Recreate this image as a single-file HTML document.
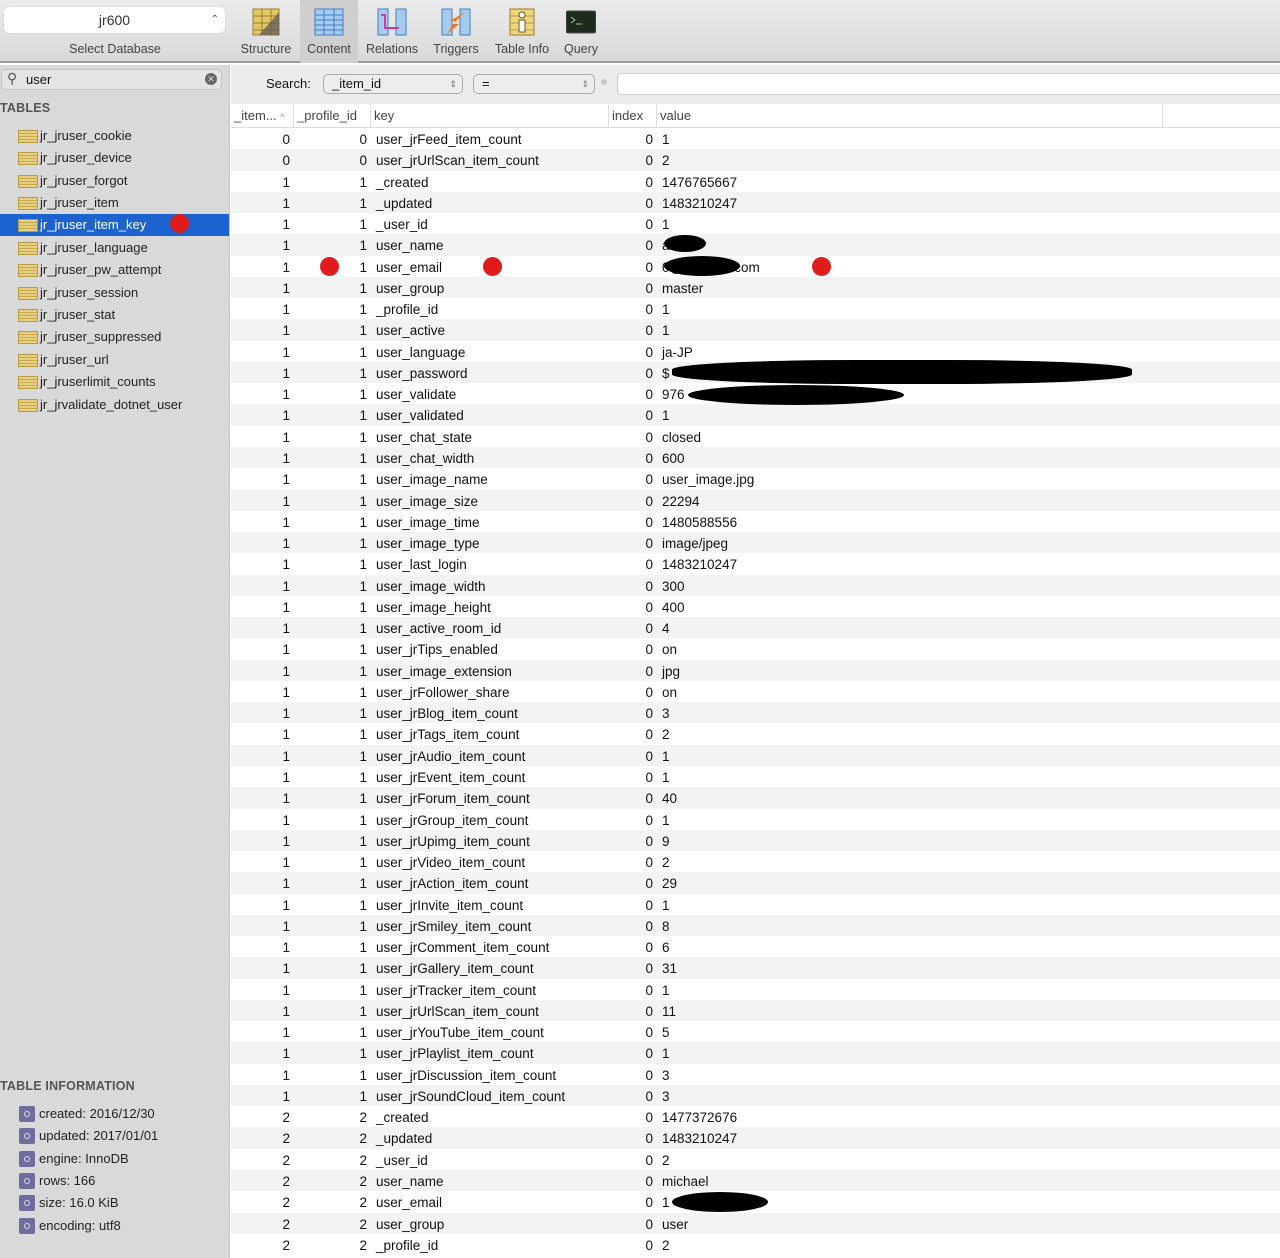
<!DOCTYPE html>
<html><head><meta charset="utf-8"><style>
*{margin:0;padding:0;box-sizing:border-box}
body{width:1280px;height:1258px;overflow:hidden;background:#fff;font-family:"Liberation Sans",sans-serif;position:relative;color:#111}
.tb{position:absolute;left:0;top:0;width:1280px;height:63px;background:linear-gradient(#ebebeb,#d9d9d9);border-bottom:2px solid #9c9c9c}
.db{position:absolute;left:4px;top:7px;width:221px;height:26px;background:#fff;border-radius:5px;box-shadow:0 0 1px #aaa;text-align:center;font-size:14px;line-height:26px;color:#333}
.db span{position:absolute;right:6px;top:0;font-size:10px;color:#555}
.sdl{position:absolute;left:0;top:42px;width:230px;text-align:center;font-size:12.5px;color:#444}
.tool{position:absolute;top:0;height:63px;text-align:center;font-size:12.5px;color:#444}
.tool .lab{position:absolute;top:42px;left:0;right:0}
.tool svg{position:absolute;top:6px;left:50%;margin-left:-15px}
.side{position:absolute;left:0;top:65px;width:230px;height:1193px;background:#d9d9d9;border-right:1px solid #c8c8c8}
.fs{position:absolute;left:1px;top:4px;width:221px;height:21px;background:#e4e4e4;border:1px solid #c4c4c4;border-radius:5px;font-size:13px;line-height:19px;padding-left:24px}
.hd{position:absolute;left:0;font-size:12.5px;color:#555;font-weight:bold;letter-spacing:0.2px}
.it{position:absolute;left:0;width:229px;height:22px;font-size:13px;line-height:22px;padding-left:40px;color:#222}
.it i{position:absolute;left:18px;top:5px;width:20px;height:13px;background:repeating-linear-gradient(#e5cf82 0 2px,#c9a94a 2px 3px);border:1px solid #b7993f}
.it.sel{background:#1c63d0;color:#fff}
.inf{position:absolute;left:0;font-size:13px;color:#222;padding-left:39px;height:22px;line-height:22px}
.inf i{position:absolute;left:19px;top:3px;width:16px;height:16px;background:#6f6c9e;border-radius:2px}
.inf i:after{content:"";position:absolute;left:5px;top:5px;width:4px;height:4px;border:1px solid #dcdaf0;border-radius:50%}
.sbar{position:absolute;left:231px;top:65px;width:1049px;height:39px;background:#ececec}
.sel2{position:absolute;top:9px;height:20px;border:1px solid #aaa;border-radius:5px;background:#ededed;font-size:13px;line-height:18px;padding-left:8px}
.thead{position:absolute;left:231px;top:104px;width:1049px;height:24px;background:#fff;border-bottom:1px solid #ddd;font-size:13px;color:#444}
.thead div{position:absolute;top:0;height:24px;line-height:24px;border-right:1px solid #ddd;padding-left:3px}
.rows{position:absolute;left:231px;top:128px;width:1049px}
.r{height:21.27px;position:relative;font-size:13.5px;line-height:21px}
.r:nth-child(even){background:#f3f3f3}
.r span{position:absolute;top:1px}
.a{right:990px}.b{right:913px}.c{left:145px}.d{right:627px}.e{left:431px}
.blk{position:absolute;background:#000;border-radius:50%}
.dot{position:absolute;width:19px;height:19px;border-radius:50%;background:#e01b1b}
</style></head><body>
<div class="tb">
 <div class="db">jr600<span>&#8963;<br></span></div>
 <div class="sdl">Select Database</div>
 <div class="tool" style="left:234px;width:64px"><svg width="30" height="30"><rect x="2" y="3" width="26" height="26" fill="#e3c766" stroke="#9a7b2a"/><path d="M2 10h26M2 17h26M2 24h26M11 3v26M20 3v26" stroke="#9a7b2a"/><path d="M28 6 L8 29 H28Z" fill="#555" opacity=".7"/></svg><div class="lab">Structure</div></div>
 <div class="tool" style="left:300px;width:58px;background:#cfcfcf"><svg width="30" height="30"><rect x="1" y="3" width="28" height="26" fill="#a7cbee" stroke="#3f7fc4"/><path d="M1 9h28M1 14h28M1 19h28M1 24h28M10 3v26M20 3v26" stroke="#3f7fc4"/></svg><div class="lab">Content</div></div>
 <div class="tool" style="left:362px;width:60px"><svg width="30" height="30"><rect x="1" y="3" width="10" height="26" fill="#a7cbee" stroke="#3f7fc4"/><rect x="19" y="3" width="10" height="26" fill="#a7cbee" stroke="#3f7fc4"/><path d="M4 9h4v13h14" stroke="#d0399a" stroke-width="2" fill="none"/></svg><div class="lab">Relations</div></div>
 <div class="tool" style="left:426px;width:60px"><svg width="30" height="30"><rect x="1" y="3" width="10" height="26" fill="#a7cbee" stroke="#3f7fc4"/><rect x="19" y="3" width="10" height="26" fill="#a7cbee" stroke="#3f7fc4"/><path d="M24 6 L12 18 h6 L6 28 L14 15 h-5z" fill="#f07a1a"/></svg><div class="lab">Triggers</div></div>
 <div class="tool" style="left:490px;width:64px"><svg width="30" height="30"><rect x="3" y="3" width="24" height="26" fill="#ecd67e" stroke="#9a7b2a"/><path d="M3 10h24M3 17h24M3 24h24" stroke="#b89a45"/><circle cx="15" cy="9" r="3" fill="#fff" stroke="#6b5620"/><rect x="12" y="14" width="6" height="12" fill="#fff" stroke="#6b5620"/></svg><div class="lab">Table Info</div></div>
 <div class="tool" style="left:558px;width:46px"><svg width="30" height="30"><rect x="0" y="5" width="30" height="22" rx="2" fill="#1d2a1d" stroke="#555"/><path d="M5 11l4 3-4 3M10 18h6" stroke="#8bd48b" fill="none"/></svg><div class="lab">Query</div></div>
</div>
<div class="side">
 <div class="fs"><span style="position:absolute;left:5px;top:-1px;font-size:14px;color:#555">&#9906;</span>user<span style="position:absolute;right:4px;top:3px;width:12px;height:12px;border-radius:50%;background:#666;color:#ddd;font-size:9px;line-height:12px;text-align:center">&#10005;</span></div>
 <div class="hd" style="top:36px">TABLES</div>
 <div class="it" style="top:60px"><i></i>jr_jruser_cookie</div>
 <div class="it" style="top:82px"><i></i>jr_jruser_device</div>
 <div class="it" style="top:105px"><i></i>jr_jruser_forgot</div>
 <div class="it" style="top:127px"><i></i>jr_jruser_item</div>
 <div class="it sel" style="top:149px"><i></i>jr_jruser_item_key</div>
 <div class="it" style="top:172px"><i></i>jr_jruser_language</div>
 <div class="it" style="top:194px"><i></i>jr_jruser_pw_attempt</div>
 <div class="it" style="top:217px"><i></i>jr_jruser_session</div>
 <div class="it" style="top:239px"><i></i>jr_jruser_stat</div>
 <div class="it" style="top:261px"><i></i>jr_jruser_suppressed</div>
 <div class="it" style="top:284px"><i></i>jr_jruser_url</div>
 <div class="it" style="top:306px"><i></i>jr_jruserlimit_counts</div>
 <div class="it" style="top:329px"><i></i>jr_jrvalidate_dotnet_user</div>
 <div class="hd" style="top:1014px">TABLE INFORMATION</div>
 <div class="inf" style="top:1038px"><i></i>created: 2016/12/30</div>
 <div class="inf" style="top:1060px"><i></i>updated: 2017/01/01</div>
 <div class="inf" style="top:1083px"><i></i>engine: InnoDB</div>
 <div class="inf" style="top:1105px"><i></i>rows: 166</div>
 <div class="inf" style="top:1127px"><i></i>size: 16.0 KiB</div>
 <div class="inf" style="top:1150px"><i></i>encoding: utf8</div>
</div>
<div class="dot" style="left:170px;top:214px"></div>
<div class="sbar">
 <span style="position:absolute;left:35px;top:11px;font-size:13px">Search:</span>
 <div class="sel2" style="left:92px;width:140px">_item_id<span style="position:absolute;right:5px;font-size:9px;color:#777">&#8661;</span></div>
 <div class="sel2" style="left:242px;width:122px">=<span style="position:absolute;right:5px;font-size:9px;color:#777">&#8661;</span></div>
 <span style="position:absolute;left:370px;top:14px;width:6px;height:6px;border-radius:50%;background:#c8c8c8"></span>
 <div style="position:absolute;left:386px;top:8px;width:680px;height:22px;background:#fff;border:1px solid #ccc;border-radius:4px"></div>
</div>
<div class="thead">
 <div style="left:0;width:63px">_item... <span style="font-size:9px;color:#888">^</span></div>
 <div style="left:63px;width:77px">_profile_id</div>
 <div style="left:140px;width:238px">key</div>
 <div style="left:378px;width:48px">index</div>
 <div style="left:426px;width:506px">value</div>
</div>
<div class="rows">
<div class="r"><span class="a">0</span><span class="b">0</span><span class="c">user_jrFeed_item_count</span><span class="d">0</span><span class="e">1</span></div>
<div class="r"><span class="a">0</span><span class="b">0</span><span class="c">user_jrUrlScan_item_count</span><span class="d">0</span><span class="e">2</span></div>
<div class="r"><span class="a">1</span><span class="b">1</span><span class="c">_created</span><span class="d">0</span><span class="e">1476765667</span></div>
<div class="r"><span class="a">1</span><span class="b">1</span><span class="c">_updated</span><span class="d">0</span><span class="e">1483210247</span></div>
<div class="r"><span class="a">1</span><span class="b">1</span><span class="c">_user_id</span><span class="d">0</span><span class="e">1</span></div>
<div class="r"><span class="a">1</span><span class="b">1</span><span class="c">user_name</span><span class="d">0</span><span class="e">a</span></div>
<div class="r"><span class="a">1</span><span class="b">1</span><span class="c">user_email</span><span class="d">0</span><span class="e">0@xxxxxxx.com</span></div>
<div class="r"><span class="a">1</span><span class="b">1</span><span class="c">user_group</span><span class="d">0</span><span class="e">master</span></div>
<div class="r"><span class="a">1</span><span class="b">1</span><span class="c">_profile_id</span><span class="d">0</span><span class="e">1</span></div>
<div class="r"><span class="a">1</span><span class="b">1</span><span class="c">user_active</span><span class="d">0</span><span class="e">1</span></div>
<div class="r"><span class="a">1</span><span class="b">1</span><span class="c">user_language</span><span class="d">0</span><span class="e">ja-JP</span></div>
<div class="r"><span class="a">1</span><span class="b">1</span><span class="c">user_password</span><span class="d">0</span><span class="e">$</span></div>
<div class="r"><span class="a">1</span><span class="b">1</span><span class="c">user_validate</span><span class="d">0</span><span class="e">976</span></div>
<div class="r"><span class="a">1</span><span class="b">1</span><span class="c">user_validated</span><span class="d">0</span><span class="e">1</span></div>
<div class="r"><span class="a">1</span><span class="b">1</span><span class="c">user_chat_state</span><span class="d">0</span><span class="e">closed</span></div>
<div class="r"><span class="a">1</span><span class="b">1</span><span class="c">user_chat_width</span><span class="d">0</span><span class="e">600</span></div>
<div class="r"><span class="a">1</span><span class="b">1</span><span class="c">user_image_name</span><span class="d">0</span><span class="e">user_image.jpg</span></div>
<div class="r"><span class="a">1</span><span class="b">1</span><span class="c">user_image_size</span><span class="d">0</span><span class="e">22294</span></div>
<div class="r"><span class="a">1</span><span class="b">1</span><span class="c">user_image_time</span><span class="d">0</span><span class="e">1480588556</span></div>
<div class="r"><span class="a">1</span><span class="b">1</span><span class="c">user_image_type</span><span class="d">0</span><span class="e">image/jpeg</span></div>
<div class="r"><span class="a">1</span><span class="b">1</span><span class="c">user_last_login</span><span class="d">0</span><span class="e">1483210247</span></div>
<div class="r"><span class="a">1</span><span class="b">1</span><span class="c">user_image_width</span><span class="d">0</span><span class="e">300</span></div>
<div class="r"><span class="a">1</span><span class="b">1</span><span class="c">user_image_height</span><span class="d">0</span><span class="e">400</span></div>
<div class="r"><span class="a">1</span><span class="b">1</span><span class="c">user_active_room_id</span><span class="d">0</span><span class="e">4</span></div>
<div class="r"><span class="a">1</span><span class="b">1</span><span class="c">user_jrTips_enabled</span><span class="d">0</span><span class="e">on</span></div>
<div class="r"><span class="a">1</span><span class="b">1</span><span class="c">user_image_extension</span><span class="d">0</span><span class="e">jpg</span></div>
<div class="r"><span class="a">1</span><span class="b">1</span><span class="c">user_jrFollower_share</span><span class="d">0</span><span class="e">on</span></div>
<div class="r"><span class="a">1</span><span class="b">1</span><span class="c">user_jrBlog_item_count</span><span class="d">0</span><span class="e">3</span></div>
<div class="r"><span class="a">1</span><span class="b">1</span><span class="c">user_jrTags_item_count</span><span class="d">0</span><span class="e">2</span></div>
<div class="r"><span class="a">1</span><span class="b">1</span><span class="c">user_jrAudio_item_count</span><span class="d">0</span><span class="e">1</span></div>
<div class="r"><span class="a">1</span><span class="b">1</span><span class="c">user_jrEvent_item_count</span><span class="d">0</span><span class="e">1</span></div>
<div class="r"><span class="a">1</span><span class="b">1</span><span class="c">user_jrForum_item_count</span><span class="d">0</span><span class="e">40</span></div>
<div class="r"><span class="a">1</span><span class="b">1</span><span class="c">user_jrGroup_item_count</span><span class="d">0</span><span class="e">1</span></div>
<div class="r"><span class="a">1</span><span class="b">1</span><span class="c">user_jrUpimg_item_count</span><span class="d">0</span><span class="e">9</span></div>
<div class="r"><span class="a">1</span><span class="b">1</span><span class="c">user_jrVideo_item_count</span><span class="d">0</span><span class="e">2</span></div>
<div class="r"><span class="a">1</span><span class="b">1</span><span class="c">user_jrAction_item_count</span><span class="d">0</span><span class="e">29</span></div>
<div class="r"><span class="a">1</span><span class="b">1</span><span class="c">user_jrInvite_item_count</span><span class="d">0</span><span class="e">1</span></div>
<div class="r"><span class="a">1</span><span class="b">1</span><span class="c">user_jrSmiley_item_count</span><span class="d">0</span><span class="e">8</span></div>
<div class="r"><span class="a">1</span><span class="b">1</span><span class="c">user_jrComment_item_count</span><span class="d">0</span><span class="e">6</span></div>
<div class="r"><span class="a">1</span><span class="b">1</span><span class="c">user_jrGallery_item_count</span><span class="d">0</span><span class="e">31</span></div>
<div class="r"><span class="a">1</span><span class="b">1</span><span class="c">user_jrTracker_item_count</span><span class="d">0</span><span class="e">1</span></div>
<div class="r"><span class="a">1</span><span class="b">1</span><span class="c">user_jrUrlScan_item_count</span><span class="d">0</span><span class="e">11</span></div>
<div class="r"><span class="a">1</span><span class="b">1</span><span class="c">user_jrYouTube_item_count</span><span class="d">0</span><span class="e">5</span></div>
<div class="r"><span class="a">1</span><span class="b">1</span><span class="c">user_jrPlaylist_item_count</span><span class="d">0</span><span class="e">1</span></div>
<div class="r"><span class="a">1</span><span class="b">1</span><span class="c">user_jrDiscussion_item_count</span><span class="d">0</span><span class="e">3</span></div>
<div class="r"><span class="a">1</span><span class="b">1</span><span class="c">user_jrSoundCloud_item_count</span><span class="d">0</span><span class="e">3</span></div>
<div class="r"><span class="a">2</span><span class="b">2</span><span class="c">_created</span><span class="d">0</span><span class="e">1477372676</span></div>
<div class="r"><span class="a">2</span><span class="b">2</span><span class="c">_updated</span><span class="d">0</span><span class="e">1483210247</span></div>
<div class="r"><span class="a">2</span><span class="b">2</span><span class="c">_user_id</span><span class="d">0</span><span class="e">2</span></div>
<div class="r"><span class="a">2</span><span class="b">2</span><span class="c">user_name</span><span class="d">0</span><span class="e">michael</span></div>
<div class="r"><span class="a">2</span><span class="b">2</span><span class="c">user_email</span><span class="d">0</span><span class="e">1</span></div>
<div class="r"><span class="a">2</span><span class="b">2</span><span class="c">user_group</span><span class="d">0</span><span class="e">user</span></div>
<div class="r"><span class="a">2</span><span class="b">2</span><span class="c">_profile_id</span><span class="d">0</span><span class="e">2</span></div>
</div>
<div class="blk" style="left:664px;top:235px;width:42px;height:17px"></div>
<div class="blk" style="left:664px;top:256px;width:76px;height:20px"></div>
<div class="blk" style="left:672px;top:360px;width:460px;height:24px;border-radius:40%"></div>
<div class="blk" style="left:688px;top:385px;width:216px;height:20px"></div>
<div class="blk" style="left:672px;top:1192px;width:96px;height:20px"></div>
<div class="dot" style="left:320px;top:257px"></div>
<div class="dot" style="left:483px;top:257px"></div>
<div class="dot" style="left:812px;top:257px"></div>
</body></html>
